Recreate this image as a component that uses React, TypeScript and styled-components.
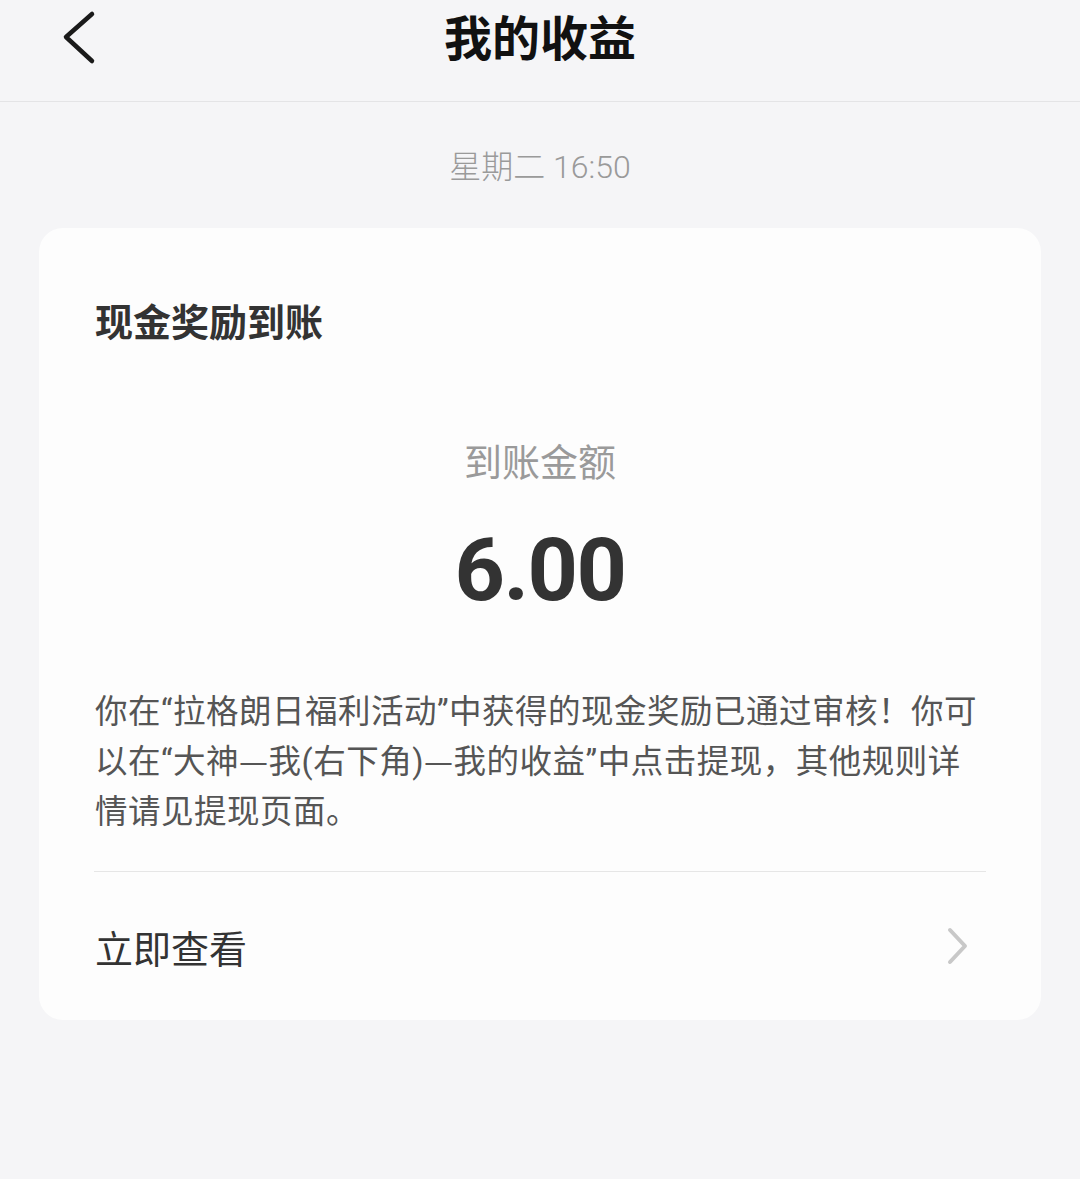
import React from 'react'
import styled, { createGlobalStyle } from 'styled-components'

const GlobalStyle = createGlobalStyle`
  html, body {
    margin: 0;
    padding: 0;
    background: #f5f5f7;
    font-family: Roboto, "Noto Sans CJK SC", sans-serif;
  }
`

const Page = styled.div`
  min-height: 1179px;
  background: #f5f5f7;
`

const Header = styled.header`
  align-items: flex-start;
  border-bottom: 1px solid #e4e4e6;
  display: flex;
  height: 101px;
  justify-content: center;
  position: relative;
`

const BackButton = styled.button`
  background: none;
  border: none;
  cursor: pointer;
  left: 55px;
  padding: 0;
  position: absolute;
  top: 9px;
`

const Title = styled.h1`
  color: #111;
  font-family: "Noto Sans CJK SC", sans-serif;
  font-size: 48px;
  font-weight: 700;
  line-height: 70px;
  margin: 0;
`

const Content = styled.main`
  display: flex;
  flex-direction: column;
  padding: 43px 39px 0;
`

const Time = styled.div`
  color: #9a9a9a;
  font-family: Roboto, "Noto Sans CJK SC", sans-serif;
  font-size: 32px;
  font-weight: 300;
  line-height: 44px;
  text-align: center;
`

const Card = styled.section`
  background: #fdfdfd;
  border-radius: 24px;
  display: flex;
  flex-direction: column;
  margin-top: 39px;
  padding: 67px 55px 0;
`

const CardTitle = styled.h2`
  color: #333;
  font-family: "Noto Sans CJK SC", sans-serif;
  font-size: 38px;
  font-weight: 700;
  line-height: 50px;
  margin: 0 0 0 1px;
`

const AmountLabel = styled.div`
  color: #9a9a9a;
  font-family: "Noto Sans CJK SC", sans-serif;
  font-size: 38px;
  line-height: 50px;
  margin-top: 90px;
  text-align: center;
`

const Amount = styled.div`
  color: #333;
  font-family: Roboto, sans-serif;
  font-size: 88px;
  font-weight: 700;
  letter-spacing: -1.5px;
  line-height: 100px;
  margin-top: 35px;
  text-align: center;
`

const Message = styled.div`
  color: #555;
  display: flex;
  flex-direction: column;
  font-family: Roboto, "Noto Sans CJK SC", sans-serif;
  font-size: 32.5px;
  letter-spacing: 0.5px;
  margin: 67px 0 0 1px;
`

const MessageLine = styled.div`
  height: 50px;
  line-height: 50px;
  white-space: nowrap;
`

const Dash = styled.span`
  font-family: "Noto Sans CJK SC", sans-serif;
  line-height: 1;
`

const Divider = styled.hr`
  border: none;
  border-top: 1px solid #e6e6e6;
  margin: 34px 0 0;
`

const LinkRow = styled.a`
  align-items: center;
  color: #333;
  cursor: pointer;
  display: flex;
  font-family: "Noto Sans CJK SC", sans-serif;
  font-size: 38px;
  height: 148px;
  justify-content: space-between;
  padding: 0 15px 0 1px;
  text-decoration: none;
`

const ChevronLeft: React.FC = () => (
  <svg width="44" height="56" viewBox="0 0 44 56">
    <path d="M37 5 L11 28 L37 52" fill="none" stroke="#1a1a1a" strokeWidth="4.5" strokeLinecap="round" strokeLinejoin="round" />
  </svg>
)

const ChevronRight: React.FC = () => (
  <svg width="26" height="40" viewBox="0 0 26 40">
    <path d="M5 4 L20 20 L5 36" fill="none" stroke="#c8c8c8" strokeWidth="4" strokeLinecap="round" strokeLinejoin="round" />
  </svg>
)

export default function App() {
  return (
    <Page>
      <GlobalStyle />
      <Header>
        <BackButton aria-label="返回">
          <ChevronLeft />
        </BackButton>
        <Title>我的收益</Title>
      </Header>
      <Content>
        <Time>星期二 16:50</Time>
        <Card>
          <CardTitle>现金奖励到账</CardTitle>
          <AmountLabel>到账金额</AmountLabel>
          <Amount>6.00</Amount>
          <Message>
            <MessageLine>你在“拉格朗日福利活动”中获得的现金奖励已通过审核！你可</MessageLine>
            <MessageLine>
              以在“大神<Dash>—</Dash>我(右下角)<Dash>—</Dash>我的收益”中点击提现，其他规则详
            </MessageLine>
            <MessageLine>情请见提现页面。</MessageLine>
          </Message>
          <Divider />
          <LinkRow>
            <span>立即查看</span>
            <ChevronRight />
          </LinkRow>
        </Card>
      </Content>
    </Page>
  )
}
